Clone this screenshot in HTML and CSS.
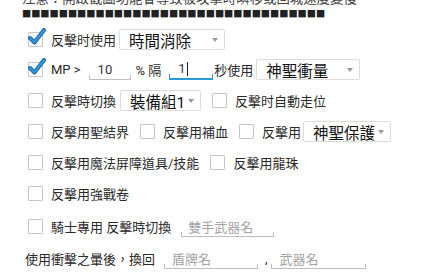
FILE: index.html
```html
<!DOCTYPE html>
<html lang="zh-Hant">

<head>
    <meta charset="UTF-8">
    <meta name="viewport" content="width=device-width, initial-scale=1.0">
    <title>反擊設定</title>
    <link rel="stylesheet" href="styles.css">
</head>

<body>
    <div class="panel">
        <p class="note">注意：開啟截圖功能會導致被攻擊時瞬移或回城速度變慢</p>
        <p class="tofu">■■■■■■■■■■■■■■■■■■■■■■■■■■■■■■■■■</p>

        <div class="row first">
            <label class="check">
                <span class="box">
                    <svg width="20" height="20" viewBox="0 0 20 20"><path d="M3 10 L7.5 14.5 L17 2" fill="none" stroke="#1d5f96" stroke-width="4" stroke-linecap="round" stroke-linejoin="round"/><path d="M3 10 L7.5 14.5 L17 2" fill="none" stroke="#2f95e0" stroke-width="2.4" stroke-linecap="round" stroke-linejoin="round"/></svg>
                </span>
                反擊时使用
            </label>
            <div class="select sel-time">時間消除<span class="arrow"></span></div>
        </div>

        <div class="row">
            <label class="check">
                <span class="box">
                    <svg width="20" height="20" viewBox="0 0 20 20"><path d="M3 10 L7.5 14.5 L17 2" fill="none" stroke="#1d5f96" stroke-width="4" stroke-linecap="round" stroke-linejoin="round"/><path d="M3 10 L7.5 14.5 L17 2" fill="none" stroke="#2f95e0" stroke-width="2.4" stroke-linecap="round" stroke-linejoin="round"/></svg>
                </span>
                MP &gt;
            </label>
            <div class="field f-mp">10</div>
            <span class="txt t-pct">% 隔</span>
            <div class="field f-sec focus">1<span class="caret"></span></div>
            <span class="txt t-use">秒使用</span>
            <div class="select sel-skill">神聖衝量<span class="arrow"></span></div>
        </div>

        <div class="row">
            <label class="check"><span class="box"></span>反擊時切換</label>
            <div class="select sel-set">裝備組1<span class="arrow"></span></div>
            <label class="check next"><span class="box"></span>反擊时自動走位</label>
        </div>

        <div class="row">
            <label class="check"><span class="box"></span>反擊用聖結界</label>
            <label class="check next"><span class="box"></span>反擊用補血</label>
            <label class="check next"><span class="box"></span>反擊用</label>
            <div class="select sel-guard">神聖保護<span class="arrow"></span></div>
        </div>

        <div class="row">
            <label class="check"><span class="box"></span>反擊用魔法屏障道具/技能</label>
            <label class="check next"><span class="box"></span>反擊用龍珠</label>
        </div>

        <div class="row">
            <label class="check"><span class="box"></span>反擊用強戰卷</label>
        </div>

        <div class="row knight">
            <label class="check"><span class="box"></span>騎士專用 反擊時切換</label>
            <div class="field f-two"><span class="ph">雙手武器名</span></div>
        </div>

        <div class="row last">
            <span class="txt">使用衝擊之暈後，換回</span>
            <div class="field f-shield"><span class="ph">盾牌名</span></div>
            <span class="txt comma">,</span>
            <div class="field f-weapon"><span class="ph">武器名</span></div>
        </div>
    </div>
</body>

</html>
```

FILE: styles.css
```css
body {
    margin: 0;
    font-family: Roboto, "Noto Sans CJK TC", sans-serif;
    color: #333;
    background: #fff;
    overflow: hidden;
}

.panel {
    padding-left: 22px;
}

.note {
    margin: -10px 0 0;
    font-size: 13.4px;
    line-height: 17px;
    color: #444;
    white-space: nowrap;
}

/* missing glyphs in the original font */
.tofu {
    margin: 1px 0 0;
    font-family: "Noto Sans CJK TC", sans-serif;
    font-size: 9.2px;
    line-height: 10px;
    color: #222;
    white-space: nowrap;
}

.row {
    display: flex;
    align-items: center;
    height: 31px;
    padding-left: 6px;
    font-size: 13px;
    color: #2a2a2a;
    white-space: nowrap;
}

.row.first {
    height: 29px;
    margin-top: 7px;
}

.row.knight {
    margin-top: 2px;
}

.row.last {
    padding-left: 3px;
    margin-top: 1px;
}

.check {
    display: flex;
    align-items: center;
}

.check.next {
    margin-left: 11px;
}

.box {
    position: relative;
    width: 15px;
    height: 15px;
    margin-right: 8px;
    border: 1px solid #c6c6c6;
    border-radius: 1px;
    box-sizing: border-box;
    background: #fff;
}

.box svg {
    position: absolute;
    left: -2px;
    top: -5px;
}

.select {
    display: flex;
    align-items: center;
    height: 21px;
    padding-left: 9px;
    border: 1px solid #dcdcdc;
    border-radius: 2px;
    box-sizing: border-box;
    font-size: 15.5px;
    color: #111;
}

.arrow {
    margin-left: auto;
    margin-right: 6px;
    border-left: 3.5px solid transparent;
    border-right: 3.5px solid transparent;
    border-top: 4px solid #999;
}

.sel-time {
    width: 106px;
    margin-left: 3px;
}

.sel-skill {
    width: 104px;
    margin-left: 3px;
}

.sel-set {
    width: 81px;
    margin-left: 4px;
}

.sel-guard {
    width: 88px;
    margin-left: 2px;
}

.field {
    position: relative;
    display: flex;
    align-items: center;
    height: 21px;
    padding-left: 9px;
    border-bottom: 1px solid #bdbdbd;
    box-sizing: border-box;
    font-size: 13px;
    color: #333;
}

.field::before,
.field::after {
    content: "";
    position: absolute;
    bottom: 0;
    width: 1px;
    height: 4px;
    background: #bdbdbd;
}

.field::before {
    left: 0;
}

.field::after {
    right: 0;
}

.field.focus {
    border-bottom: 2px solid #2a9ad8;
}

.field.focus::before,
.field.focus::after {
    background: #2a9ad8;
}

.caret {
    width: 1px;
    height: 14px;
    margin-left: 1px;
    background: #222;
}

.ph {
    color: #a3a3a3;
}

.f-mp {
    width: 42px;
    margin-left: 8px;
}

.t-pct {
    margin-left: 5px;
}

.f-sec {
    width: 44px;
    margin-left: 8px;
}

.t-use {
    margin-left: 1px;
}

.f-two {
    width: 93px;
    margin-left: 10px;
    padding-left: 7px;
}

.f-shield {
    width: 94px;
    margin-left: 9px;
    padding-left: 8px;
}

.comma {
    margin-left: 7px;
}

.f-weapon {
    width: 95px;
    margin-left: 3px;
    padding-left: 9px;
}
```
